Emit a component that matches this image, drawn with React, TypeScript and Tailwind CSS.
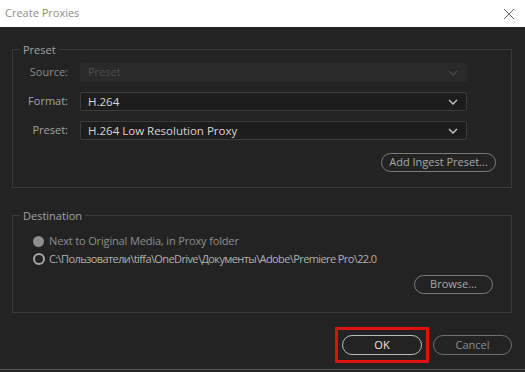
import React from "react";

const Chevron = ({ color }: { color: string }) => (
  <svg width="10" height="6" viewBox="0 0 10 6" fill="none">
    <path d="M1 1L5 5L9 1" stroke={color} strokeWidth="1.3" />
  </svg>
);

export default function App() {
  const font = { fontFamily: '"Open Sans", "Noto Sans", sans-serif' };
  return (
    <div className="w-[525px] h-[372px] bg-[#232323] flex flex-col overflow-hidden text-[11px]" style={font}>
      <div className="h-[27px] bg-white flex items-center justify-between pl-[5px] pr-[10px] shrink-0">
        <span className="text-[11px] text-[#8c8c8c]">Create Proxies</span>
        <svg width="12" height="12" viewBox="0 0 12 12">
          <path d="M1 1L11 11M11 1L1 11" stroke="#6b6b6b" strokeWidth="1" />
        </svg>
      </div>

      <div className="px-[12px] pt-[15px] flex flex-col">
        <fieldset className="border border-[#3a3a3a] pl-[1px] pr-[15px] pb-[15px] w-[500px]">
          <legend className="ml-[6px] px-[3px] text-[#a3a3a3] leading-[15px]">Preset</legend>
          <div className="flex flex-col gap-[10px] pt-[6px]">
            <div className="flex items-center">
              <span className="w-[54px] text-right text-[#8a8a8a]">Source:</span>
              <div className="ml-[12px] w-[387px] h-[19px] bg-[#2a2a2a] rounded-[2px] flex items-center justify-between pl-[8px] pr-[9px]">
                <span className="text-[#4e4e4e]">Preset</span>
                <Chevron color="#4a4a4a" />
              </div>
            </div>
            <div className="flex items-center">
              <span className="w-[54px] text-right text-[#a3a3a3]">Format:</span>
              <div className="ml-[12px] w-[387px] h-[19px] bg-[#1d1d1d] border border-[#3c3c3c] rounded-[2px] flex items-center justify-between pl-[7px] pr-[8px]">
                <span className="text-[#d6d6d6] text-[11.5px]">H.264</span>
                <Chevron color="#c8c8c8" />
              </div>
            </div>
            <div className="flex items-center">
              <span className="w-[54px] text-right text-[#a3a3a3]">Preset:</span>
              <div className="ml-[12px] w-[387px] h-[19px] bg-[#1d1d1d] border border-[#3c3c3c] rounded-[2px] flex items-center justify-between pl-[7px] pr-[8px]">
                <span className="text-[#d6d6d6] text-[11.5px]">H.264 Low Resolution Proxy</span>
                <Chevron color="#c8c8c8" />
              </div>
            </div>
          </div>
          <div className="flex justify-end mt-[13px]">
            <button className="w-[115px] h-[19px] rounded-full border border-[#7a7a7a] text-[#a8a8a8] flex items-center justify-center">
              Add Ingest Preset...
            </button>
          </div>
        </fieldset>

        <fieldset className="border border-[#3a3a3a] mt-[20px] pl-[1px] pr-[18px] pb-[18px] w-[500px]">
          <legend className="ml-[6px] px-[3px] text-[#a3a3a3] leading-[15px]">Destination</legend>
          <div className="flex flex-col pt-[9px] pl-[19px]">
            <div className="flex items-center h-[18px]">
              <span className="w-[11px] h-[11px] rounded-full bg-[#8e8e8e]" />
              <span className="ml-[5px] text-[#8e8e8e] tracking-[-0.15px]">Next to Original Media, in Proxy folder</span>
            </div>
            <div className="flex items-center h-[18px]">
              <span className="w-[12px] h-[12px] rounded-full border-[2px] border-[#a8a8a8]" />
              <span className="ml-[4px] text-[#b0b0b0] tracking-[-0.6px]">C:\Пользователи\tiffa\OneDrive\Документы\Adobe\Premiere Pro\22.0</span>
            </div>
          </div>
          <div className="flex justify-end mt-[7px]">
            <button className="w-[79px] h-[19px] rounded-full border border-[#7a7a7a] text-[#a8a8a8] flex items-center justify-center">
              Browse...
            </button>
          </div>
        </fieldset>

        <div className="flex justify-end items-center mt-[14px] gap-[4px] pr-[1px]">
          <div className="border-[3px] border-[#e01010] px-[4px] py-[5px]">
            <button className="w-[80px] h-[20px] rounded-full border border-[#bdbdbd] text-[#e8e8e8] flex items-center justify-center">
              OK
            </button>
          </div>
          <button className="w-[79px] h-[20px] rounded-full border border-[#6e6e6e] text-[#8e8e8e] flex items-center justify-center">
            Cancel
          </button>
        </div>
      </div>
      <div className="mt-auto mb-[2px] h-[1px] bg-[#5a5a5a]" />
    </div>
  );
}
